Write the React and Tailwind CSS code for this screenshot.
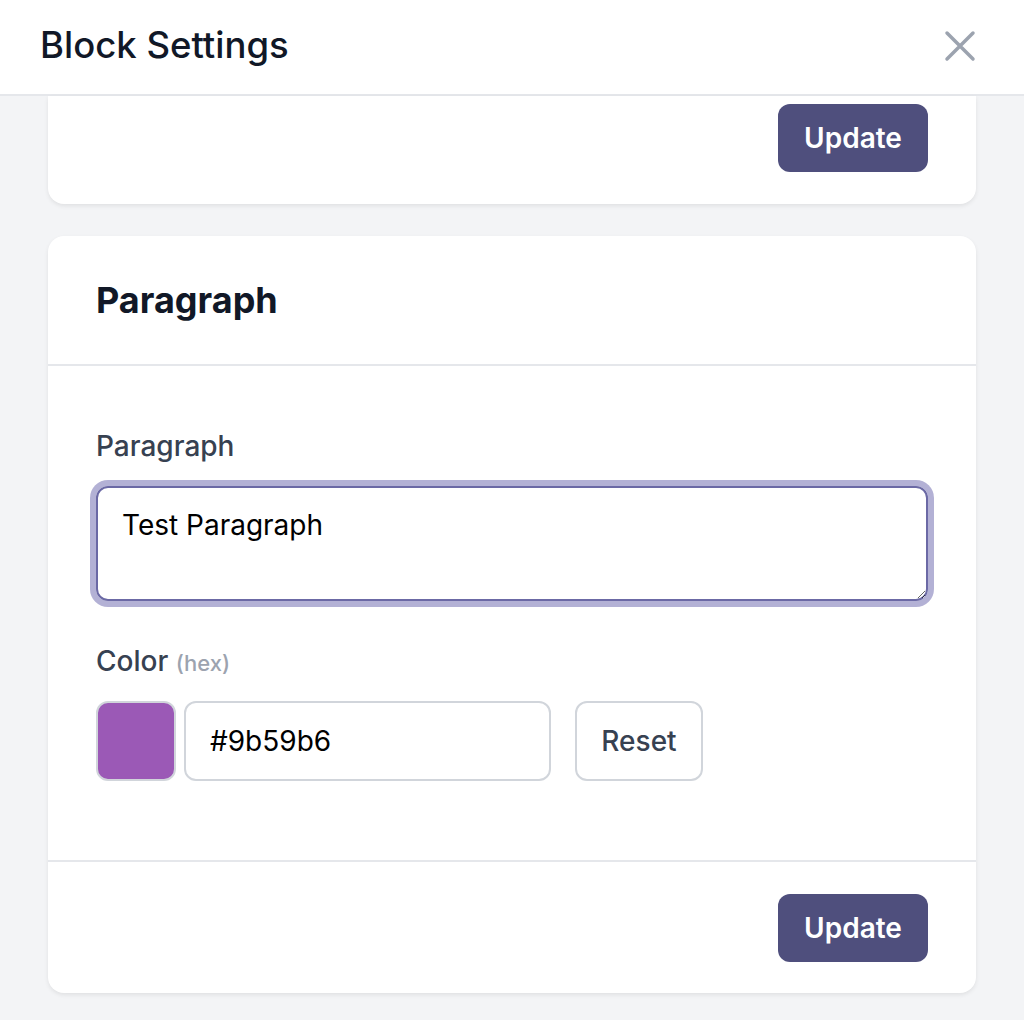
import React from "react";

export default function App() {
  return (
    <div
      className="w-full h-[1020px] overflow-hidden bg-[#f3f4f6] flex flex-col"
      style={{ fontFamily: "Inter, 'Noto Sans', sans-serif" }}
    >
      <header className="h-[96px] shrink-0 bg-white border-b-2 border-[#e5e7eb] flex items-center justify-between pl-[40px] pr-[48px]">
        <h1 className="text-[36.5px] leading-[44px] font-medium text-[#111827] mb-[4px]">
          Block Settings
        </h1>
        <button className="w-[32px] h-[32px] flex items-center justify-center text-[#9ca3af] mb-[2px]">
          <svg width="32" height="32" viewBox="0 0 32 32" fill="none" stroke="currentColor" strokeWidth="3.5" strokeLinecap="round">
            <path d="M3 3 L29 29 M29 3 L3 29" />
          </svg>
        </button>
      </header>

      <div className="px-[48px] flex flex-col gap-[32px]">
        <div className="bg-white rounded-b-2xl shadow-[0_2px_4px_rgba(0,0,0,0.08)] pt-[8px] pb-[32px] pr-[48px] flex justify-end">
          <button className="h-[68px] w-[150px] rounded-xl bg-[#4f4f7d] text-white text-[28px] font-semibold">
            Update
          </button>
        </div>

        <div className="bg-white rounded-2xl shadow-[0_2px_4px_rgba(0,0,0,0.08)] flex flex-col">
          <div className="h-[130px] px-[48px] flex items-center border-b-2 border-[#e5e7eb]">
            <h2 className="text-[36px] font-bold text-[#111827]">Paragraph</h2>
          </div>

          <div className="px-[48px] pt-[60px] pb-[79px] flex flex-col">
            <label className="text-[28px] leading-[40px] font-medium text-[#374151]">Paragraph</label>
            <textarea
              defaultValue="Test Paragraph"
              className="mt-[20px] h-[115px] w-full rounded-xl border-2 border-[#6b69a5] ring-[6px] ring-[#b3b1d5] outline-none px-[24px] py-[17px] text-[28px] leading-[40px] text-black"
            />

            <label className="mt-[40px] text-[28px] leading-[40px] font-medium text-[#374151]">
              Color <span className="text-[22px] text-[#9ca3af]">(hex)</span>
            </label>
            <div className="mt-[18px] flex items-center">
              <div className="w-[80px] h-[80px] rounded-xl border-2 border-[#d1d5db] bg-[#9b59b6]" />
              <input
                defaultValue="#9b59b6"
                className="ml-[8px] w-[367px] h-[80px] rounded-xl border-2 border-[#d1d5db] px-[24px] text-[28px] text-black outline-none"
              />
              <button className="ml-[24px] w-[128px] h-[80px] rounded-xl border-2 border-[#d1d5db] text-[28px] font-medium text-[#374151]">
                Reset
              </button>
            </div>
          </div>

          <div className="h-[133px] border-t-2 border-[#e5e7eb] pr-[48px] flex items-center justify-end">
            <button className="h-[68px] w-[150px] rounded-xl bg-[#4f4f7d] text-white text-[28px] font-semibold">
              Update
            </button>
          </div>
        </div>
      </div>
    </div>
  );
}
